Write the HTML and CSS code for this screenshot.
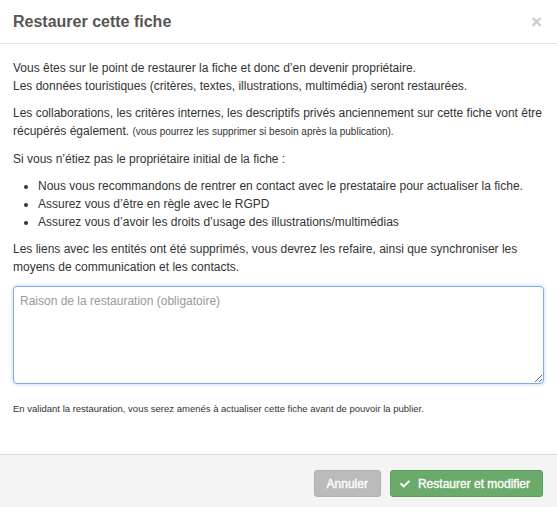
FILE: index.html
```html
<!DOCTYPE html>
<html lang="fr">
<head>
    <meta charset="UTF-8">
    <meta name="viewport" content="width=device-width, initial-scale=1.0">
    <title>Restaurer cette fiche</title>
    <link rel="stylesheet" href="styles.css">
</head>
<body>
    <div class="modal">
        <div class="modal-header">
            <h4 class="modal-title">Restaurer cette fiche</h4>
            <button class="close-btn" type="button">&times;</button>
        </div>

        <div class="modal-body">
            <p>
                Vous êtes sur le point de restaurer la fiche et donc d’en devenir propriétaire.<br>
                Les données touristiques (critères, textes, illustrations, multimédia) seront restaurées.
            </p>
            <p>
                Les collaborations, les critères internes, les descriptifs privés anciennement sur cette fiche vont être
                récupérés également. <small>(vous pourrez les supprimer si besoin après la publication).</small>
            </p>
            <p>Si vous n’étiez pas le propriétaire initial de la fiche :</p>
            <ul>
                <li>Nous vous recommandons de rentrer en contact avec le prestataire pour actualiser la fiche.</li>
                <li>Assurez vous d’être en règle avec le RGPD</li>
                <li>Assurez vous d’avoir les droits d’usage des illustrations/multimédias</li>
            </ul>
            <p>
                Les liens avec les entités ont été supprimés, vous devrez les refaire, ainsi que synchroniser les
                moyens de communication et les contacts.
            </p>

            <textarea class="reason" placeholder="Raison de la restauration (obligatoire)"></textarea>

            <p class="note">En validant la restauration, vous serez amenés à actualiser cette fiche avant de pouvoir la publier.</p>
        </div>

        <div class="modal-footer">
            <button class="btn btn-cancel" type="button">Annuler</button>
            <button class="btn btn-success" type="button">
                <svg class="icon" viewBox="0 0 512 512" aria-hidden="true">
                    <path d="M173.9 439.4l-166.4-166.4c-10-10-10-26.2 0-36.2l36.2-36.2c10-10 26.2-10 36.2 0L192 312.7 432.1 72.6c10-10 26.2-10 36.2 0l36.2 36.2c10 10 10 26.2 0 36.2l-294.4 294.4c-10 10-26.2 10-36.2 0z"/>
                </svg>
                Restaurer et modifier
            </button>
        </div>
    </div>
</body>
</html>
```

FILE: styles.css
```css
* {
    margin: 0;
    padding: 0;
    box-sizing: border-box;
}

body {
    font-family: 'Liberation Sans', Arial, sans-serif;
    font-size: 12px;
    line-height: 18px;
    color: #333;
    background-color: white;
}

.modal {
    width: 557px;
    min-height: 507px;
    display: flex;
    flex-direction: column;
    background-color: white;
}

.modal-header {
    display: flex;
    justify-content: space-between;
    align-items: center;
    padding: 10px 12px 10px 13px;
    border-bottom: 1px solid #e5e5e5;
}

.modal-title {
    font-size: 16px;
    line-height: 23px;
    font-weight: bold;
    color: #555;
}

.close-btn {
    background: none;
    border: none;
    font-family: inherit;
    font-size: 19px;
    font-weight: bold;
    line-height: 1;
    color: #ccc;
    margin-right: 3px;
    cursor: pointer;
}

.modal-body {
    flex: 1;
    padding: 15px 13px 38px;
}

.modal-body p {
    margin-bottom: 9px;
}

.modal-body small {
    font-size: 10px;
}

.modal-body ul {
    padding-left: 25px;
    margin-bottom: 9px;
}

.reason {
    display: block;
    width: 531px;
    height: 98px;
    margin-top: 10px;
    padding: 5px 6px;
    font-family: inherit;
    font-size: 12px;
    line-height: 18px;
    color: #333;
    border: 1px solid #7fabea;
    border-radius: 4px;
    box-shadow: 0 0 4px rgba(102, 155, 233, 0.45);
    outline: none;
}

.reason::placeholder {
    color: #999;
}

.modal-body .note {
    margin: 18px 0 0;
    font-size: 9.5px;
    line-height: 14px;
}

.modal-footer {
    display: flex;
    justify-content: flex-end;
    gap: 9px;
    padding: 15px 14px 10px;
    background-color: #f4f4f4;
    border-top: 1px solid #ddd;
}

.btn {
    display: flex;
    align-items: center;
    gap: 8px;
    height: 27px;
    padding: 0 12px;
    font-family: inherit;
    font-size: 12px;
    font-weight: normal;
    -webkit-text-stroke: 0.35px white;
    color: white;
    border-radius: 3px;
    cursor: pointer;
}

.btn-cancel {
    background-color: #bbb;
    border: 1px solid #b0b0b0;
}

.btn-success {
    background-color: #6aaa6a;
    border: 1px solid #5c9c5c;
    padding-left: 9px;
}

.icon {
    width: 10px;
    height: 10px;
    fill: white;
}
```
